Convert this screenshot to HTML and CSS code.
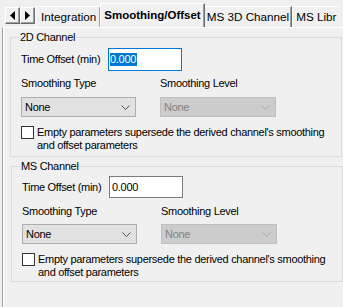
FILE: index.html
```html
<!DOCTYPE html>
<html>
<head>
<meta charset="utf-8">
<link rel="stylesheet" href="styles.css">
</head>
<body>
<div class="tabbar">
  <div class="scroller">
    <span class="sbtn"><svg width="5" height="9" viewBox="0 0 5 9"><polygon points="5,0 0,4.5 5,9" fill="#000"/></svg></span>
    <span class="sbtn"><svg width="5" height="9" viewBox="0 0 5 9"><polygon points="0,0 5,4.5 0,9" fill="#000"/></svg></span>
  </div>
  <div class="tab tab-first">Integration</div>
  <div class="tab active">Smoothing/Offset</div>
  <div class="tab tab-ms3d">MS 3D Channel</div>
  <div class="tab tab-last">MS Libr</div>
</div>
<div class="panel">
  <fieldset class="group g2d">
    <legend>2D Channel</legend>
    <div class="offset-row">
      <span class="lbl">Time Offset (min)</span>
      <div class="input focused"><span class="sel">0.000</span></div>
    </div>
    <div class="grid2">
      <span class="lbl">Smoothing Type</span>
      <span class="lbl">Smoothing Level</span>
      <div class="combo"><span>None</span><svg width="9" height="5" viewBox="0 0 9 5"><polyline points="0.5,0.5 4.5,4.5 8.5,0.5" fill="none" stroke="#505050" stroke-width="1"/></svg></div>
      <div class="combo disabled"><span>None</span><svg width="9" height="5" viewBox="0 0 9 5"><polyline points="0.5,0.5 4.5,4.5 8.5,0.5" fill="none" stroke="#a8a8a8" stroke-width="1"/></svg></div>
    </div>
    <div class="check-row">
      <span class="box"></span>
      <span class="check-text">Empty parameters supersede the derived channel's smoothing<br>and offset parameters</span>
    </div>
  </fieldset>
  <fieldset class="group gms">
    <legend>MS Channel</legend>
    <div class="offset-row">
      <span class="lbl">Time Offset (min)</span>
      <div class="input"><span class="val">0.000</span></div>
    </div>
    <div class="grid2">
      <span class="lbl">Smoothing Type</span>
      <span class="lbl">Smoothing Level</span>
      <div class="combo"><span>None</span><svg width="9" height="5" viewBox="0 0 9 5"><polyline points="0.5,0.5 4.5,4.5 8.5,0.5" fill="none" stroke="#505050" stroke-width="1"/></svg></div>
      <div class="combo disabled"><span>None</span><svg width="9" height="5" viewBox="0 0 9 5"><polyline points="0.5,0.5 4.5,4.5 8.5,0.5" fill="none" stroke="#a8a8a8" stroke-width="1"/></svg></div>
    </div>
    <div class="check-row">
      <span class="box"></span>
      <span class="check-text">Empty parameters supersede the derived channel's smoothing<br>and offset parameters</span>
    </div>
  </fieldset>
</div>
</body>
</html>
```
FILE: styles.css
```css
html, body {
  margin: 0;
  padding: 0;
}
body {
  width: 343px;
  height: 307px;
  overflow: hidden;
  background: #f0f0f0;
  font-family: "Liberation Sans", Arial, sans-serif;
  color: #000;
}
.tabbar {
  display: flex;
  align-items: flex-end;
  height: 27px;
  position: relative;
  z-index: 1;
  white-space: nowrap;
  overflow: hidden;
}
.scroller {
  display: flex;
  margin: 0 0 3px 5px;
}
.sbtn {
  width: 15px;
  height: 17px;
  box-sizing: border-box;
  display: flex;
  align-items: center;
  justify-content: center;
  border-top: 1px solid #fff;
  border-left: 1px solid #fff;
  border-right: 1px solid #696969;
  border-bottom: 1px solid #696969;
  box-shadow: inset -1px -1px 0 #a0a0a0;
  background: #f0f0f0;
}
.tab {
  height: 21px;
  box-sizing: border-box;
  line-height: 19px;
  font-size: 11.7px;
  padding: 0 4px;
  border-top: 1px solid #fff;
  border-left: 1px solid #fff;
  border-right: 1px solid #696969;
  box-shadow: inset -1px 0 0 #a0a0a0;
  background: #f0f0f0;
}
.tab-first {
  padding: 0 4px 0 5px;
}
.tab.active {
  height: 25px;
  margin: 0 -2px -1px -1px;
  padding: 0 3px 0 3px;
  line-height: 23px;
  font-size: 11.5px;
  font-weight: bold;
  position: relative;
  z-index: 2;
}
.tab-ms3d {
  padding: 0 2px 0 3px;
}
.tab-last {
  padding: 0 2px 0 3px;
  border-right: none;
  box-shadow: none;
}
.panel {
  margin-left: 2px;
  height: 280px;
  box-sizing: border-box;
  border-top: 1px solid #fff;
  border-left: 1px solid #a0a0a0;
  box-shadow: inset 1px 0 0 #fff;
  padding: 3px 0 0 7px;
  font-size: 11px;
  letter-spacing: -0.3px;
}
.group {
  margin: 0;
  width: 332px;
  box-sizing: border-box;
  border: 1px solid #dcdcdc;
  padding: 0 0 4px 10px;
  min-width: 0;
}
.group legend {
  font-size: 11px;
  line-height: 13px;
  padding: 0 1px;
  margin-left: -2px;
}
.gms {
  margin: 3px 0 0 1px;
  padding-bottom: 2px;
}
.lbl {
  line-height: 13px;
}
.offset-row {
  display: flex;
  align-items: center;
  margin-top: 4px;
}
.gms .offset-row {
  margin-top: 3px;
}
.offset-row .lbl {
  width: 87px;
}
.input {
  width: 74px;
  height: 22px;
  box-sizing: border-box;
  border: 1px solid #7a7a7a;
  background: #fff;
  display: flex;
  align-items: center;
  padding-left: 2px;
}
.input.focused {
  height: 23px;
  border-color: #0078d7;
  padding-left: 1px;
}
.sel {
  background: #0078d7;
  color: #fff;
  line-height: 13px;
  padding-right: 1px;
}
.grid2 {
  display: grid;
  grid-template-columns: 139px 116px;
  row-gap: 7px;
  margin-top: 6px;
}
.gms .grid2 {
  margin-top: 7px;
  row-gap: 6px;
}
.combo {
  height: 20px;
  box-sizing: border-box;
  border: 1px solid #adadad;
  background: #e1e1e1;
  display: flex;
  align-items: center;
  justify-content: space-between;
  padding: 0 5px 0 3px;
}
.combo svg {
  display: block;
  margin-top: 1px;
}
.combo.disabled {
  border-color: #bfbfbf;
  background: #cccccc;
  color: #838383;
}
.grid2 .combo:first-of-type {
  width: 115px;
}
.check-row {
  display: flex;
  align-items: flex-start;
  margin-top: 9px;
}
.box {
  width: 13px;
  height: 13px;
  box-sizing: border-box;
  border: 1px solid #333;
  background: #fff;
  flex: none;
}
.check-text {
  margin-left: 3px;
  line-height: 13px;
}
```
